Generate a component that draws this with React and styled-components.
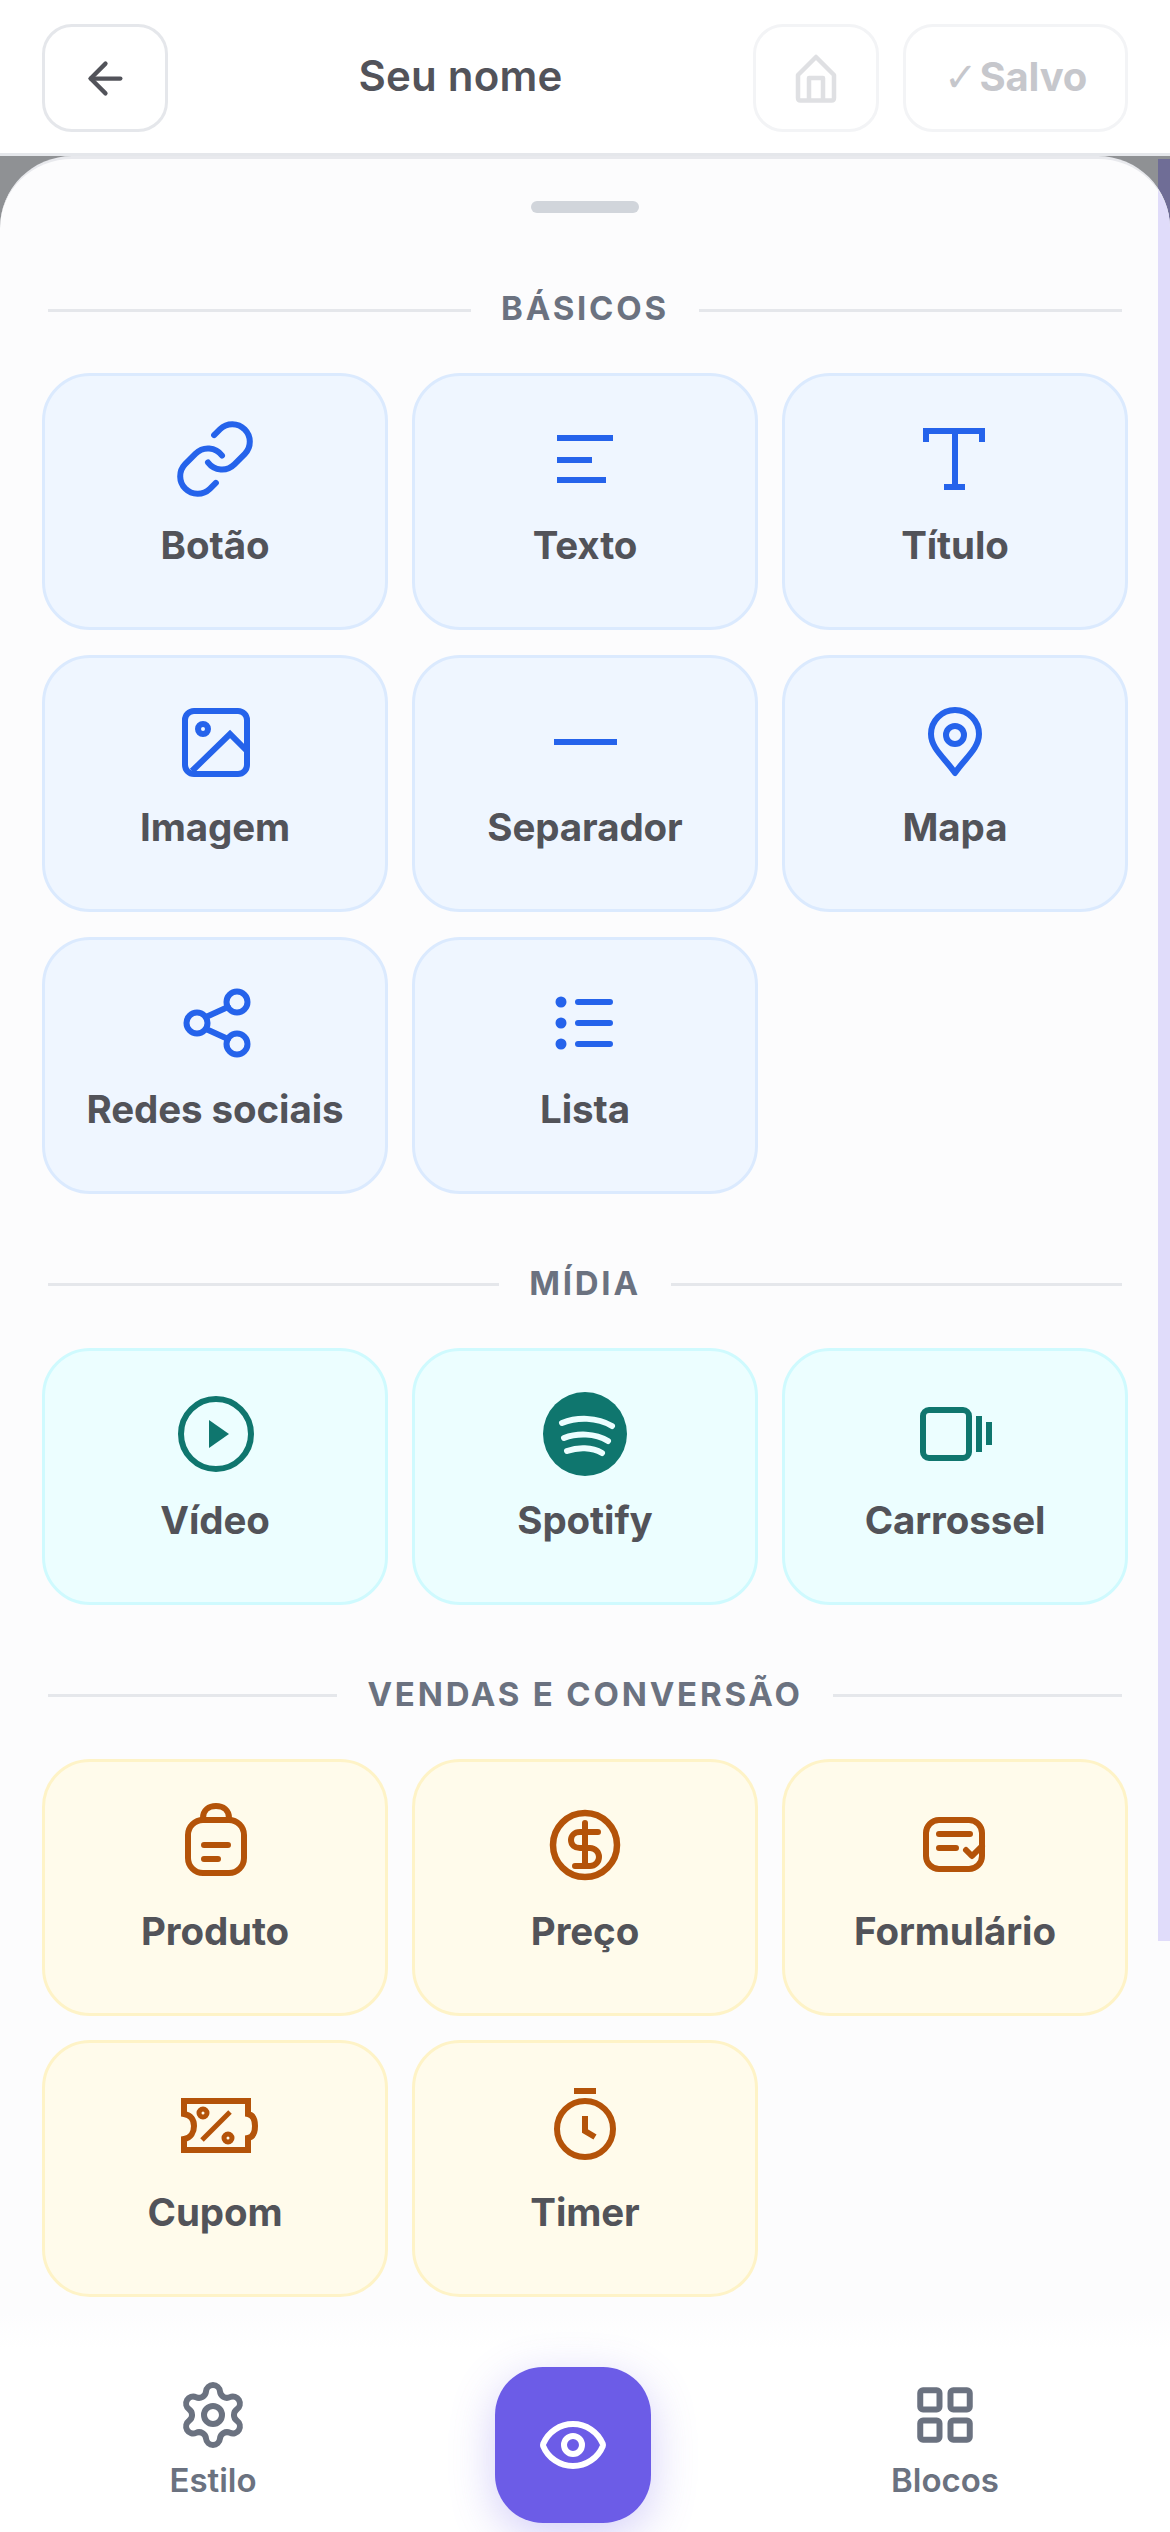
import React from "react";
import styled, { createGlobalStyle } from "styled-components";
import { ArrowLeft, Eye, Settings, LayoutGrid } from "lucide-react";

const FONT = `Inter, "Liberation Sans", sans-serif`;

const Global = createGlobalStyle`
  html, body { margin: 0; padding: 0; background: #fff; }
  body { font-family: ${FONT}; }
  * { box-sizing: border-box; }
`;

const TONES = {
  blue: { bg: "#eff6ff", border: "#dbeafe", ink: "#2563eb" },
  cyan: { bg: "#ecfeff", border: "#cffafe", ink: "#0f766e" },
  amber: { bg: "#fffbeb", border: "#fef3c7", ink: "#b45309" },
};

const Page = styled.div`
  width: 1170px;
  height: 2532px;
  display: flex;
  flex-direction: column;
  overflow: hidden;
`;

const Header = styled.header`
  height: 156px;
  flex: none;
  display: flex;
  align-items: flex-start;
  gap: 24px;
  padding: 24px 42px 0;
  background: #fff;
  border-bottom: 3px solid #e5e7eb;
`;

const IconButton = styled.button`
  width: 126px;
  height: 108px;
  flex: none;
  display: flex;
  align-items: center;
  justify-content: center;
  padding: 0;
  background: #fff;
  border: 3px solid ${(p) => (p.$muted ? "#f3f4f6" : "#e5e7eb")};
  border-radius: 30px;
  color: ${(p) => (p.$muted ? "#dfe0e3" : "#52535a")};
`;

const SaveButton = styled.button`
  width: 225px;
  height: 108px;
  flex: none;
  padding: 0 0 4px;
  background: #fff;
  border: 3px solid #f3f4f6;
  border-radius: 30px;
  color: #c6c7cc;
  font-family: ${FONT};
  font-size: 40px;
  font-weight: 700;
  letter-spacing: -0.2px;
  word-spacing: -7px;
  white-space: nowrap;
`;

const SaveCheck = styled.span`
  font-family: "DejaVu Sans", sans-serif;
  font-size: 40px;
`;

const PageTitle = styled.h1`
  flex: 1;
  margin: 0;
  line-height: 104px;
  text-align: center;
  color: #52535a;
  font-size: 42px;
  font-weight: 600;
  letter-spacing: 0.2px;
`;

const Backdrop = styled.div`
  flex: 1;
  min-height: 0;
  position: relative;
  background: #8f9194;
  display: flex;
`;

const BackdropStrip = styled.div`
  position: absolute;
  top: 3px;
  right: 0;
  width: 12px;
  height: 120px;
  background: #6f6d96;
`;

const Sheet = styled.main`
  position: relative;
  flex: 1;
  display: flex;
  flex-direction: column;
  background: #fcfcfd;
  border-top: 3px solid #e8e9ed;
  border-radius: 72px 72px 0 0;
  overflow: hidden;
  padding-top: 42px;
`;

const ScrollStrip = styled.div`
  position: absolute;
  top: 0;
  right: 0;
  width: 12px;
  height: 1782px;
  background: #e0dcfa;
`;

const Handle = styled.div`
  width: 108px;
  height: 12px;
  flex: none;
  margin: 0 auto 76px;
  border-radius: 6px;
  background: #d1d5db;
`;

const Section = styled.section`
  padding: 0 42px;
  & + & { margin-top: 70px; }
`;

const SectionTitle = styled.div`
  height: 42px;
  margin-bottom: 42px;
  padding: 0 6px;
  display: flex;
  align-items: flex-start;
  gap: 30px;
  color: #6b7280;
  font-size: 33px;
  line-height: 38px;
  font-weight: 700;
  letter-spacing: 2.8px;
  white-space: nowrap;
  &::before, &::after {
    content: "";
    flex: 1;
    height: 3px;
    align-self: center;
    background: #e5e7eb;
  }
`;

const Grid = styled.div`
  display: grid;
  grid-template-columns: repeat(3, 1fr);
  grid-auto-rows: 257px;
  gap: 24.75px 24px;
`;

const Card = styled.div`
  display: flex;
  flex-direction: column;
  align-items: center;
  padding-top: 41px;
  border: 3px solid ${(p) => TONES[p.$tone].border};
  border-radius: 48px;
  background: ${(p) => TONES[p.$tone].bg};
  color: ${(p) => TONES[p.$tone].ink};
`;

const CardLabel = styled.span`
  margin-top: 14px;
  line-height: 60px;
  color: #525359;
  font-size: 38.5px;
  font-weight: 700;
  letter-spacing: -0.1px;
  white-space: nowrap;
`;

const Glyph = styled.svg.attrs({ viewBox: "0 0 84 84", fill: "none" })`
  width: 84px;
  height: 84px;
  flex: none;
  overflow: visible;
  stroke: currentColor;
  stroke-width: 6;
`;

const RoundGlyph = styled(Glyph)`
  stroke-linecap: round;
  stroke-linejoin: round;
`;

const HomeGlyph = styled.svg.attrs({ viewBox: "0 0 60 60", fill: "none" })`
  width: 60px;
  height: 60px;
  stroke: currentColor;
  stroke-width: 4.5;
  stroke-linejoin: round;
`;

const BottomNav = styled.nav`
  flex: 1;
  margin-top: 16px;
  display: grid;
  grid-template-columns: 426px 294px 450px;
  align-items: start;
  background: linear-gradient(#fcfcfd, #fff 36px);
  position: relative;
`;

const NavItem = styled.div`
  margin-top: 66px;
  display: flex;
  flex-direction: column;
  align-items: center;
  color: #6b7280;
`;

const NavIconSlot = styled.div`
  height: 72px;
  display: flex;
  align-items: center;
  justify-content: center;
`;

const NavLabel = styled.span`
  margin-top: 6px;
  line-height: 46px;
  font-size: 33px;
  font-weight: 600;
`;

const Fab = styled.button`
  justify-self: center;
  width: 156px;
  height: 156px;
  margin-top: 54px;
  display: flex;
  align-items: center;
  justify-content: center;
  padding: 0;
  border: 0;
  border-radius: 48px;
  color: #fff;
  background: #6c5ce7;
  box-shadow: 0 12px 45px rgba(108, 92, 231, 0.3);
`;

const LinkIcon = () => (
  <RoundGlyph>
    <g transform="scale(3.5)" strokeWidth="1.72">
      <path d="M10 13a5 5 0 0 0 7.54.54l3-3a5 5 0 0 0-7.07-7.07l-1.72 1.71" />
      <path d="M14 11a5 5 0 0 0-7.54-.54l-3 3a5 5 0 0 0 7.07 7.07l1.71-1.71" />
    </g>
  </RoundGlyph>
);
const TextIcon = () => (
  <Glyph><path d="M14 21H70M14 43H49M14 63H63" /></Glyph>
);
const TitleIcon = () => (
  <Glyph><path d="M13 25V14H69V25M42 14V70M31 70H52" /></Glyph>
);
const ImageIcon = () => (
  <RoundGlyph>
    <rect x="12" y="12" width="62" height="63" rx="9" />
    <circle cx="30" cy="30" r="5" />
    <path d="M19 72L57 35L73 51" strokeLinecap="butt" strokeLinejoin="miter" />
  </RoundGlyph>
);
const LineIcon = () => (
  <Glyph><path d="M11 43H74" /></Glyph>
);
const PinIcon = () => (
  <RoundGlyph>
    <path d="M42 74C33 60 18 50 18 35A24 24 0 0 1 66 35C66 50 51 60 42 74Z" />
    <circle cx="42" cy="36" r="9" />
  </RoundGlyph>
);
const ShareIcon = () => (
  <RoundGlyph>
    <circle cx="64" cy="21" r="10.5" />
    <circle cx="24" cy="42" r="10.5" />
    <circle cx="64" cy="63" r="10.5" />
    <path d="M33 36L55 26M33 48L55 58" />
  </RoundGlyph>
);
const ListIcon = () => (
  <RoundGlyph>
    <path d="M35 21H67M35 42H67M35 63H67" />
    <circle cx="18" cy="21" r="2.5" fill="currentColor" />
    <circle cx="18" cy="42" r="2.5" fill="currentColor" />
    <circle cx="18" cy="63" r="2.5" fill="currentColor" />
  </RoundGlyph>
);
const PlayIcon = () => (
  <Glyph>
    <circle cx="43" cy="42" r="35" />
    <path d="M36 28L56 42L36 56Z" fill="currentColor" stroke="none" />
  </Glyph>
);
const SpotifyIcon = () => (
  <RoundGlyph>
    <circle cx="42" cy="42" r="42" fill="currentColor" stroke="none" />
    <path d="M19 31C34 25 54 25 69 34M21 46C34 41 52 41 65 49M24 59C35 55 49 55 59 61" stroke="#ecfeff" />
  </RoundGlyph>
);
const CarouselIcon = () => (
  <RoundGlyph>
    <rect x="10" y="18" width="46" height="48" rx="6" />
    <path d="M66 24V60M76 30V53" strokeLinecap="butt" />
  </RoundGlyph>
);
const BagIcon = () => (
  <RoundGlyph>
    <rect x="15" y="17" width="56" height="53" rx="15" />
    <path d="M30 15C30 7 36 3 43 3C50 3 56 7 56 15" />
    <path d="M31 42H55M31 56H45" />
  </RoundGlyph>
);
const DollarIcon = () => (
  <RoundGlyph>
    <circle cx="42" cy="42" r="32" strokeWidth="6.5" />
    <path d="M55 29H37C31 29 28 33 28 37C28 42 32 45 37 45H47C52 45 56 49 56 54C56 59 52 63 47 63H32M42 20V62" />
  </RoundGlyph>
);
const FormIcon = () => (
  <RoundGlyph>
    <rect x="13" y="17" width="56" height="49" rx="13" />
    <path d="M26 31H57M26 45H43M53 47L59 53L69 43" />
  </RoundGlyph>
);
const CouponIcon = () => (
  <Glyph>
    <path d="M11 17H75V30C80 31 82 36 82 42C82 48 80 53 75 54V66H11V55C18 54 21 48 21 42C21 36 18 31 11 30Z" />
    <circle cx="30" cy="29" r="4" strokeWidth="5" />
    <circle cx="55" cy="54" r="4" strokeWidth="5" />
    <path d="M57 28L29 56" strokeWidth="5" />
  </Glyph>
);
const TimerIcon = () => (
  <Glyph>
    <path d="M31 7H53" />
    <circle cx="42" cy="45" r="28" />
    <path d="M42 32V47L52 53" />
  </Glyph>
);

const SECTIONS = [
  {
    title: "BÁSICOS",
    tone: "blue",
    items: [
      ["Botão", LinkIcon],
      ["Texto", TextIcon],
      ["Título", TitleIcon],
      ["Imagem", ImageIcon],
      ["Separador", LineIcon],
      ["Mapa", PinIcon],
      ["Redes sociais", ShareIcon],
      ["Lista", ListIcon],
    ],
  },
  {
    title: "MÍDIA",
    tone: "cyan",
    items: [
      ["Vídeo", PlayIcon],
      ["Spotify", SpotifyIcon],
      ["Carrossel", CarouselIcon],
    ],
  },
  {
    title: "VENDAS E CONVERSÃO",
    tone: "amber",
    items: [
      ["Produto", BagIcon],
      ["Preço", DollarIcon],
      ["Formulário", FormIcon],
      ["Cupom", CouponIcon],
      ["Timer", TimerIcon],
    ],
  },
];

export default function App() {
  return (
    <>
      <Global />
      <Page>
        <Header>
          <IconButton aria-label="Voltar">
            <ArrowLeft size={51} strokeWidth={2} />
          </IconButton>
          <PageTitle>Seu nome</PageTitle>
          <IconButton $muted aria-label="Início">
            <HomeGlyph>
              <path d="M30 9L12 27V50C12 51.5 13 52.5 14.5 52.5H45.5C47 52.5 48 51.5 48 50V27Z" />
              <path d="M23 52.5V30H37V52.5" />
            </HomeGlyph>
          </IconButton>
          <SaveButton><SaveCheck>✓</SaveCheck> Salvo</SaveButton>
        </Header>
        <Backdrop>
          <BackdropStrip />
          <Sheet>
            <ScrollStrip />
            <Handle />
            {SECTIONS.map((section) => (
              <Section key={section.title}>
                <SectionTitle>{section.title}</SectionTitle>
                <Grid>
                  {section.items.map(([label, Icon]) => (
                    <Card key={label} $tone={section.tone}>
                      <Icon />
                      <CardLabel>{label}</CardLabel>
                    </Card>
                  ))}
                </Grid>
              </Section>
            ))}
            <BottomNav>
              <NavItem>
                <NavIconSlot><Settings size={72} strokeWidth={2} /></NavIconSlot>
                <NavLabel>Estilo</NavLabel>
              </NavItem>
              <Fab aria-label="Pré-visualizar">
                <Eye size={72} strokeWidth={2} />
              </Fab>
              <NavItem>
                <NavIconSlot><LayoutGrid size={66} strokeWidth={2.18} /></NavIconSlot>
                <NavLabel>Blocos</NavLabel>
              </NavItem>
            </BottomNav>
          </Sheet>
        </Backdrop>
      </Page>
    </>
  );
}
